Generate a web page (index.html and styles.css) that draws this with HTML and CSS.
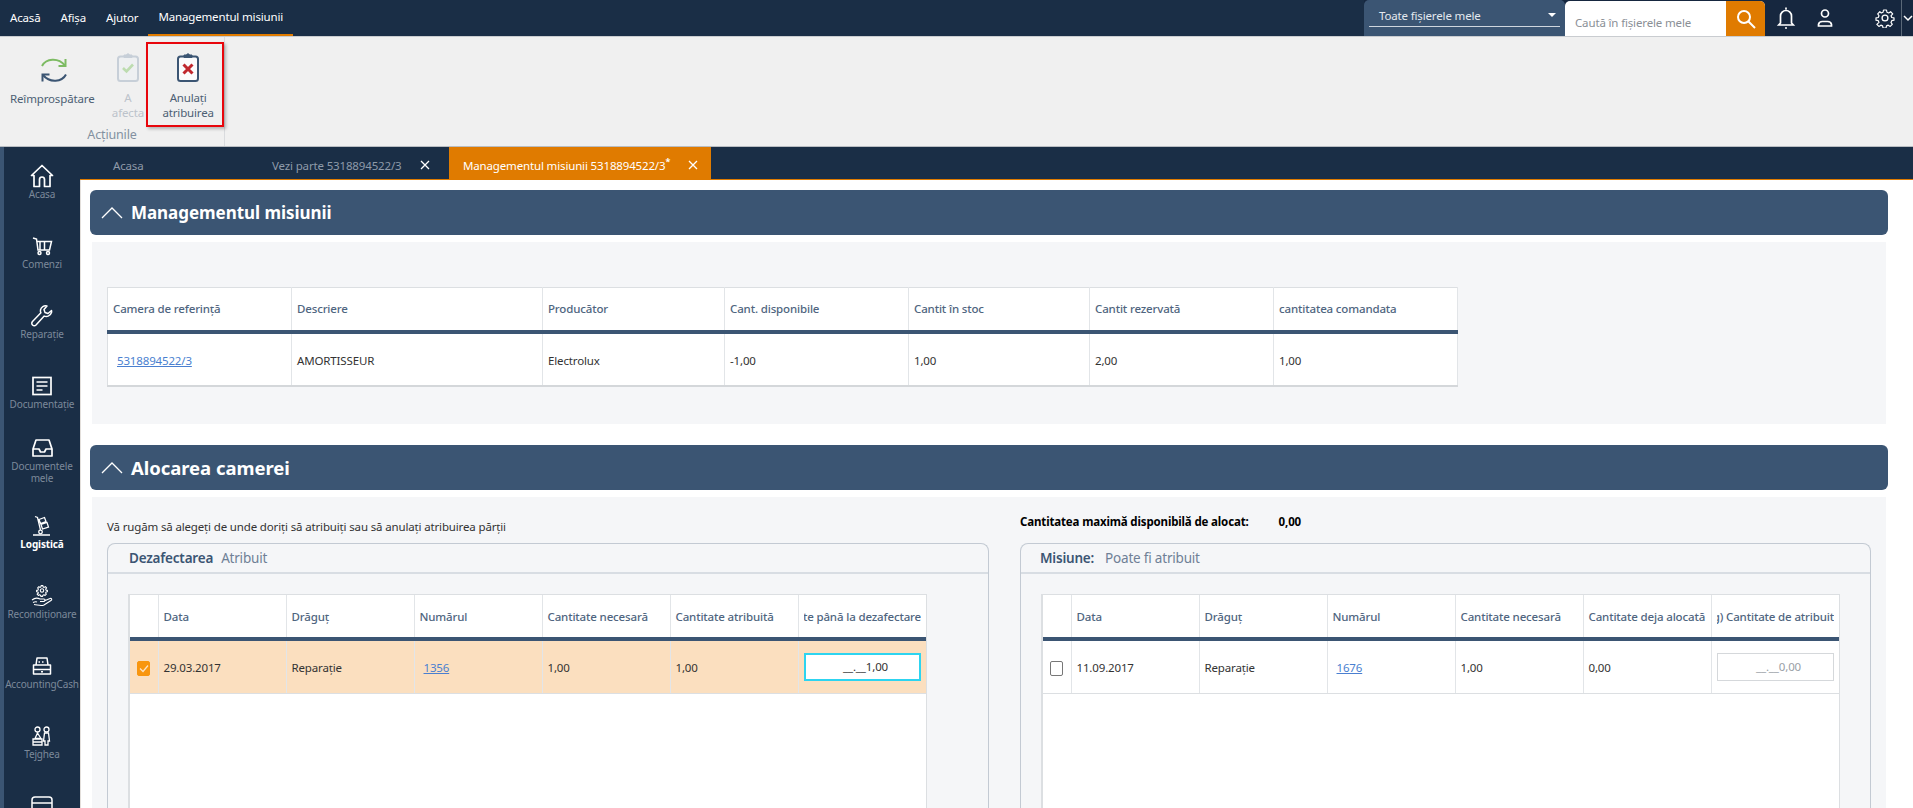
FILE: index.html
```html
<!DOCTYPE html>
<html lang="ro">
<head>
<meta charset="utf-8">
<title>Managementul misiunii</title>
<link rel="stylesheet" href="styles.css">
</head>
<body>
<div class="app">
  <header class="topbar">
    <nav class="menu">
      <a class="menu-item">Acasă</a>
      <a class="menu-item">Afișa</a>
      <a class="menu-item">Ajutor</a>
      <a class="menu-item menu-active">Managementul misiunii</a>
    </nav>
    <div class="top-tools">
      <div class="scope">
        <div class="scope-line"><span>Toate fișierele mele</span><i class="caret"></i></div>
      </div>
      <div class="search">
        <span class="search-text">Caută în fișierele mele</span>
        <span class="search-btn">
          <svg width="22" height="22" viewBox="0 0 22 22" fill="none" stroke="#fff" stroke-width="2"><circle cx="9" cy="9" r="6"/><path d="M13.5 13.5 20 20"/></svg>
        </span>
      </div>
      <span class="tool tool-bell">
        <svg width="20" height="24" viewBox="0 0 20 24" fill="none" stroke="#fff" stroke-width="1.7"><path d="M10 1.500v2M4.500 17V10a5.500 5.500 0 0 1 11 0v7l1.800 2H2.700z"/><circle cx="10" cy="22" r="1" fill="#fff" stroke="none"/></svg>
      </span>
      <span class="tool tool-user">
        <svg width="20" height="20" viewBox="0 0 20 20" fill="none" stroke="#fff" stroke-width="1.7"><circle cx="10" cy="5.500" r="3.500"/><path d="M3.500 18v-1.500a4 3.500 0 0 1 4-3h5a4 3.500 0 0 1 4 3V18z"/></svg>
      </span>
      <span class="tool tool-gear">
        <svg width="20" height="20" viewBox="0 0 24 24" fill="none" stroke="#fff" stroke-width="1.600" stroke-linejoin="round"><circle cx="12" cy="12" r="3.500"/><path d="M10 2h4l.6 3 2.300 1 2.600-1.700 2.800 2.800L20 9.700l1 2.300 3 .6v3l-3 .6-1 2.300 1.700 2.600-2.800 2.800-2.600-1.700-2.300 1-.6 2.800h-4l-.6-2.800-2.300-1-2.600 1.700-2.800-2.800L4 18.500l-1-2.300-3-.6v-3l3-.6 1-2.300-1.700-2.600 2.800-2.800L7.100 6l2.300-1z" transform="translate(1.200 .6) scale(.9)"/></svg>
      </span>
      <span class="collapse">
        <svg width="10" height="7" viewBox="0 0 10 7" fill="none" stroke="#fff" stroke-width="1.500"><path d="M1 1l4 4 4-4"/></svg>
      </span>
    </div>
  </header>

  <section class="ribbon">
    <div class="ribbon-group">
      <div class="ribbon-buttons">
        <div class="rbtn rbtn-refresh">
          <svg class="rbtn-icon" width="28" height="28" viewBox="0 0 28 28" fill="none" stroke-width="2">
            <path d="M2 10C6 2.500 18 1 25 9.500" stroke="#7dbb63"/>
            <path d="M25.500 3v7h-7" stroke="#7dbb63"/>
            <path d="M26 18.500C22 26 10 27.500 3 19" stroke="#3b5573"/>
            <path d="M2.500 25.500v-7h7" stroke="#3b5573"/>
          </svg>
          <span>Reîmprospătare</span>
        </div>
        <div class="rbtn rbtn-assign">
          <svg class="rbtn-icon" width="24" height="30" viewBox="0 0 24 30" fill="#eef0f2" stroke="#c7cfd8" stroke-width="2">
            <rect x="2" y="4.500" width="20" height="24.500" rx="2.500"/>
            <path d="M8 5.500V3h2.400a1.700 1.700 0 0 1 3.200 0H16v2.500z" fill="#c7cfd8" stroke-width="1"/>
            <path d="M7 16l3.500 3.500 6.500-7" stroke="#bddcb0" stroke-width="2.600" fill="none"/>
          </svg>
          <span>A<br>afecta</span>
        </div>
        <div class="rbtn rbtn-cancel">
          <svg class="rbtn-icon" width="24" height="30" viewBox="0 0 24 30" fill="#fbfbfc" stroke="#3b5573" stroke-width="2">
            <rect x="2" y="4.500" width="20" height="24.500" rx="2.500"/>
            <path d="M8 5.500V3h2.400a1.700 1.700 0 0 1 3.200 0H16v2.500z" fill="#3b5573" stroke-width="1"/>
            <path d="M7.500 12.500l9 9M16.500 12.500l-9 9" stroke="#c0272d" stroke-width="3" fill="none"/>
          </svg>
          <span>Anulați<br>atribuirea</span>
        </div>
      </div>
      <div class="ribbon-label">Acțiunile</div>
    </div>
  </section>

  <div class="main">
    <aside class="sidebar">
      <div class="side-item">
        <svg width="24" height="24" viewBox="0 0 24 24" fill="none" stroke="#fff" stroke-width="1.700" stroke-linejoin="round"><path d="M12 1.500 1.500 11.500H4V22.500h5.500v-7a2.500 2.500 0 0 1 5 0v7H20V11.500h2.500z"/></svg>
        <span>Acasa</span>
      </div>
      <div class="side-item">
        <svg width="21" height="19" viewBox="0 0 21 19" fill="none" stroke="#fff" stroke-width="1.500"><path d="M1 1.500l3.500 1 1.500 11h11.500l2-8.500H5M8 5v8.500M12.500 5v8.500" /><circle cx="7.500" cy="16.500" r="1.500"/><circle cx="16" cy="16.500" r="1.500"/></svg>
        <span>Comenzi</span>
      </div>
      <div class="side-item">
        <svg width="22" height="22" viewBox="0 0 22 22" fill="none" stroke="#fff" stroke-width="1.500" stroke-linejoin="round"><path d="M20.500 5.500l-3.500 3-3-1-1-3 3-3.500c-3-.7-6 .8-6.500 4-.2 1 0 2 .4 2.800L1.500 16.500c-1 1-1 2.500 0 3.500s2.500 1 3.500 0l8.200-8.900c3 1 6.300-.5 7.300-3.500.2-.7.2-1.400 0-2.100z"/></svg>
        <span>Reparație</span>
      </div>
      <div class="side-item">
        <svg width="20" height="19" viewBox="0 0 20 19" fill="none" stroke="#fff" stroke-width="1.700"><rect x="1" y="1" width="18" height="17"/><path d="M4.500 5.500h11M4.500 9.500h11M4.500 13.500h6"/></svg>
        <span>Documentație</span>
      </div>
      <div class="side-item side-two">
        <svg width="21" height="18" viewBox="0 0 21 18" fill="none" stroke="#fff" stroke-width="1.700" stroke-linejoin="round"><path d="M4 1h13l3 9v7H1v-7zM1 10h6l1.500 3h4l1.500-3h6"/></svg>
        <span>Documentele<br>mele</span>
      </div>
      <div class="side-item side-active">
        <svg width="20" height="21" viewBox="0 0 20 21" fill="none" stroke="#fff" stroke-width="1.300"><path d="M3 1l2.500 1 3 12.500M1 19.500h17M7 4l5.500-2 1.500 4-5.500 2zM9 9l6-2 1.500 4.500-6 2z"/><circle cx="8.500" cy="16.500" r="1.800"/></svg>
        <span>Logistică</span>
      </div>
      <div class="side-item">
        <svg width="22" height="23" viewBox="0 0 22 23" fill="none" stroke="#fff" stroke-width="1.100" stroke-linejoin="round"><circle cx="11" cy="6" r="1.700"/><path d="M10 2h4l.6 3 2.300 1 2.600-1.700 2.800 2.800L20 9.700l1 2.300 3 .6v3l-3 .6-1 2.300 1.700 2.600-2.800 2.800-2.600-1.700-2.300 1-.6 2.800h-4l-.6-2.800-2.300-1-2.600 1.700-2.800-2.800L4 18.500l-1-2.300-3-.6v-3l3-.6 1-2.300-1.700-2.600 2.800-2.800L7.100 6l2.300-1z" transform="translate(5.600 .2) scale(.45)" stroke-width="2.400"/><path d="M1 15.500c3-2.500 5-2.500 8-1h4c1.500.5 1.500 2 0 2.500H9M13 16.500l6-2.500c1.500-.5 2.500 1 1 2l-7 4.500c-3 1.500-6 0-10-.5M2 18c2-1 3-1 4-.5"/></svg>
        <span>Recondiționare</span>
      </div>
      <div class="side-item">
        <svg width="20" height="18" viewBox="0 0 20 18" fill="none" stroke="#fff" stroke-width="1.500" stroke-linejoin="round"><path d="M4 8 5 1h10l1 7M1.500 8h17v9h-17zM1.500 12.500h17M9 14.700h2M6.500 5h1.500M10 5h1.500"/></svg>
        <span>AccountingCash</span>
      </div>
      <div class="side-item">
        <svg width="20" height="20" viewBox="0 0 20 20" fill="none" stroke="#fff" stroke-width="1.300"><circle cx="5.500" cy="3.500" r="2.500"/><circle cx="14.500" cy="3.500" r="2.500"/><path d="M5.500 7l-2.500 5.500h6zM12.500 7h4l1 8h-1.500v4h-3v-4h-1.500zM1 13h9v6H1zM1 16h9"/></svg>
        <span>Tejghea</span>
      </div>
      <div class="side-item side-last">
        <svg width="22" height="20" viewBox="0 0 22 20" fill="none" stroke="#fff" stroke-width="1.500"><rect x="1" y="1" width="20" height="18" rx="3"/><path d="M1 7h20"/></svg>
      </div>
    </aside>

    <div class="workspace">
      <div class="tabs">
        <div class="tab tab-home">Acasa</div>
        <div class="tab tab-part">
          <span>Vezi parte 5318894522/3</span>
          <svg class="tab-x" width="10" height="10" viewBox="0 0 10 10" stroke="#fff" stroke-width="1.300"><path d="M1 1l8 8M9 1l-8 8"/></svg>
        </div>
        <div class="tab tab-active">
          <span>Managementul misiunii 5318894522/3<sup class="star">*</sup></span>
          <svg class="tab-x" width="10" height="10" viewBox="0 0 10 10" stroke="#fff" stroke-width="1.300"><path d="M1 1l8 8M9 1l-8 8"/></svg>
        </div>
      </div>

      <main class="content">
        <div class="sec-head">
          <svg width="22" height="12" viewBox="0 0 22 12" fill="none" stroke="#fff" stroke-width="1.300"><path d="M1 11 11 1l10 10"/></svg>
          <h2>Managementul misiunii</h2>
        </div>
        <div class="panel panel-top">
          <table class="grid grid-main">
            <colgroup><col class="m1"><col class="m2"><col class="m3"><col class="m4"><col class="m5"><col class="m6"><col class="m7"></colgroup>
            <thead><tr>
              <th>Camera de referință</th><th>Descriere</th><th>Producător</th><th>Cant. disponibile</th><th>Cantit în stoc</th><th>Cantit rezervată</th><th>cantitatea comandata</th>
            </tr></thead>
            <tbody><tr>
              <td><a class="link">5318894522/3</a></td><td>AMORTISSEUR</td><td>Electrolux</td><td>-1,00</td><td>1,00</td><td>2,00</td><td>1,00</td>
            </tr></tbody>
          </table>
        </div>

        <div class="sec-head sec-second">
          <svg width="22" height="12" viewBox="0 0 22 12" fill="none" stroke="#fff" stroke-width="1.300"><path d="M1 11 11 1l10 10"/></svg>
          <h2>Alocarea camerei</h2>
        </div>
        <div class="panel panel-alloc">
          <div class="col col-left">
            <p class="note">Vă rugăm să alegeți de unde doriți să atribuiți sau să anulați atribuirea părții</p>
            <div class="fieldset">
              <div class="fs-head"><b>Dezafectarea</b><span>Atribuit</span></div>
              <div class="table-wrap">
                <table class="grid grid-alloc">
                  <colgroup><col class="a0"><col class="a1"><col class="a1"><col class="a1"><col class="a1"><col class="a1"><col class="a1"></colgroup>
                  <thead><tr>
                    <th></th><th>Data</th><th>Drăguț</th><th>Numărul</th><th>Cantitate necesară</th><th>Cantitate atribuită</th>
                    <th><div class="clip-left"><span>Cantitate până la dezafectare</span></div></th>
                  </tr></thead>
                  <tbody><tr class="row-selected">
                    <td class="cell-check"><i class="check check-on"><svg width="10" height="9" viewBox="0 0 10 9" fill="none" stroke="#fde3c4" stroke-width="1.300"><path d="M1 4.500l3 3 5-6"/></svg></i></td>
                    <td>29.03.2017</td><td>Reparație</td><td><a class="link">1356</a></td><td>1,00</td><td>1,00</td>
                    <td class="cell-input"><div class="qty qty-focus">__.__1,00</div></td>
                  </tr></tbody>
                </table>
              </div>
            </div>
          </div>
          <div class="col col-right">
            <p class="max"><b>Cantitatea maximă disponibilă de alocat:</b><b class="max-val">0,00</b></p>
            <div class="fieldset">
              <div class="fs-head fs-head-right"><b>Misiune:</b><span>Poate fi atribuit</span></div>
              <div class="table-wrap">
                <table class="grid grid-alloc">
                  <colgroup><col class="a0"><col class="a1"><col class="a1"><col class="a1"><col class="a1"><col class="a1"><col class="a1"></colgroup>
                  <thead><tr>
                    <th></th><th>Data</th><th>Drăguț</th><th>Numărul</th><th>Cantitate necesară</th><th>Cantitate deja alocată</th>
                    <th><div class="clip-left"><span>(g) Cantitate de atribuit</span></div></th>
                  </tr></thead>
                  <tbody><tr>
                    <td class="cell-check"><i class="check"></i></td>
                    <td>11.09.2017</td><td>Reparație</td><td><a class="link">1676</a></td><td>1,00</td><td>0,00</td>
                    <td class="cell-input"><div class="qty qty-idle">__.__0,00</div></td>
                  </tr></tbody>
                </table>
              </div>
            </div>
          </div>
        </div>
      </main>
    </div>
  </div>
</div>
</body>
</html>
```

FILE: styles.css
```css
* { box-sizing: border-box; }
html, body { margin: 0; height: 100%; overflow: hidden; background: #fff; }
body { font-family: "Noto Sans", "Open Sans", sans-serif; font-size: 11.5px; letter-spacing: -.15px; color: #333; }
.app { display: flex; flex-direction: column; height: 808px; overflow: hidden; }

.topbar { flex: 0 0 36px; display: flex; justify-content: space-between; background: #1a2e46; }
.menu { display: flex; }
.menu-item { display: flex; align-items: center; padding: 0 10px 2px; color: #fff; height: 36px; }
.menu-active { border-bottom: 2px solid #e07b00; }
.top-tools { display: flex; height: 36px; background: #16273f; }
.scope { width: 201px; background: #3b5573; border-radius: 5px 5px 0 0; padding: 4px 5px 0; }
.scope-line { display: flex; justify-content: space-between; align-items: center; height: 23px; border-bottom: 1px solid #cfd6de; padding: 0 4px 0 10px; color: #e4e9ef; }
.caret { width: 0; height: 0; border: 4px solid transparent; border-top: 4px solid #fff; border-bottom: 0; }
.search { width: 200px; margin-top: 1px; display: flex; justify-content: space-between; background: #fff; border-radius: 5px 5px 0 0; overflow: hidden; }
.search-text { padding: 14px 0 0 10px; color: #8a8f96; }
.search-btn { width: 39px; display: flex; align-items: center; justify-content: center; background: #e07b00; }
.tool { display: flex; align-items: center; justify-content: center; }
.tool-bell { width: 40px; margin-left: 1px; }
.tool-user { width: 38px; }
.tool-gear { margin-left: 24px; width: 33px; }
.collapse { width: 12px; display: flex; align-items: center; justify-content: center; border-left: 1px solid #5a6878; }

.ribbon { flex: 0 0 111px; min-height: 0; overflow: hidden; background: #f0f0f0; border-top: 1px solid #c9ccd0; border-bottom: 1px solid #b9bdc2; }
.ribbon-group { width: 225px; height: 100%; border-right: 1px solid #d9dbde; display: flex; flex-direction: column; align-items: stretch; }
.ribbon-buttons { display: flex; margin-top: 5px; height: 85px; flex: none; }
.rbtn { display: flex; flex-direction: column; align-items: center; color: #4d5f74; line-height: 15px; text-align: center; }
.rbtn-icon { display: block; height: 30px; margin-bottom: 8px; flex: none; }
.rbtn-refresh { width: 105px; padding-top: 14px; }
.rbtn-refresh .rbtn-icon { height: 28px; margin-bottom: 7px; margin-left: 3px; }
.rbtn-assign { width: 42px; padding: 10px 0 0 5px; color: #bcc3cb; }
.rbtn-cancel { width: 78px; padding: 8px 0 0 6px; border: 2px solid #e8060c; box-shadow: 2px 2px 3px rgba(0,0,0,.25); }
.ribbon-label { text-align: center; line-height: 15px; font-size: 12.5px; color: #8390a0; }

.main { flex: 1; display: flex; min-height: 0; }
.sidebar { flex: 0 0 80px; background: #1a2e46; border-left: 4px solid #3b5573; overflow: hidden; }
.side-item { position: relative; height: 70px; display: flex; flex-direction: column; align-items: center; padding-top: 17px; color: #7c899a; font-size: 10px; line-height: 12px; text-align: center; white-space: nowrap; }
.side-item svg { display: block; height: 24px; flex: none; }
.side-two { padding-top: 9px; }
.side-active { color: #fff; font-weight: 700; }
.side-active::before { content: ""; position: absolute; left: -4px; top: 0; bottom: 0; width: 4px; background: #e07b00; }

.workspace { flex: 1; min-width: 0; display: flex; flex-direction: column; }
.tabs { flex: 0 0 33px; display: flex; background: #1a2e46; color: #8e9aa9; border-bottom: 1px solid #e07b00; }
.tab { display: flex; align-items: center; height: 32px; padding-top: 4px; white-space: nowrap; }
.tab-home { width: 178px; padding-left: 33px; }
.tab-part { width: 191px; padding-left: 14px; }
.tab-active { width: 262px; padding-left: 14px; background: #e07b00; color: #fff; }
.tab-x { margin-left: 18px; flex: none; }
.star { font-size: 9px; line-height: 0; font-weight: 700; }

.content { flex: 1; min-height: 0; background: #fff; border-left: 1px solid #e3dfdb; padding: 10px 25px 0 9px; overflow: hidden; }
.sec-head { height: 45px; display: flex; align-items: center; gap: 8px; padding-left: 11px; background: #3b5573; border-radius: 6px; color: #fff; }
.sec-head h2 { margin: 0; font-size: 17px; font-weight: 700; letter-spacing: -.05px; }
.sec-second { margin-top: 21px; }
.sec-second h2 { font-size: 18.5px; }
.panel { margin: 7px 2px 0; background: #f5f6f8; }
.panel-top { height: 182px; padding: 45px 15px 0; }
.panel-alloc { display: grid; grid-template-columns: 882px 851px; column-gap: 31px; padding: 16px 15px 0; }

.grid { border-collapse: collapse; table-layout: fixed; background: #fff; }
.grid th { height: 44px; padding: 0 5px; text-align: left; font-weight: 500; letter-spacing: -.15px; color: #4f6580; border-right: 1px solid #e2e5e8; border-bottom: 4px solid #3b5573; white-space: nowrap; }
.grid td { height: 54px; padding: 2px 5px 0; color: #333; border-right: 1px solid #e2e5e8; border-bottom: 1px solid #dcdfe2; white-space: nowrap; }
.grid-main { width: 1350px; border: 1px solid #dcdfe2; border-bottom: 2px solid #d4d7da; }
.m1 { width: 184px; } .m2 { width: 251px; } .m3 { width: 182px; } .m4 { width: 184px; } .m5 { width: 181px; } .m6 { width: 184px; } .m7 { width: 184px; }
.link { color: #4a7fd0; text-decoration: underline; padding-left: 4px; }

.note { margin: 0; padding-top: 4px; line-height: 20px; height: 30px; color: #333; }
.max { margin: 0; padding-top: 1px; line-height: 16px; height: 30px; color: #000; }
.max-val { margin-left: 30px; }
.fieldset { border: 1px solid #c3cad3; border-bottom: 0; border-radius: 8px 8px 0 0; height: 400px; }
.fs-head { height: 30px; display: flex; align-items: center; gap: 8px; padding: 0 0 0 21px; border-bottom: 2px solid #d8dde3; font-size: 13.5px; letter-spacing: -.2px; color: #6f8096; }
.fs-head b { font-weight: 600; color: #3b5573; }
.fs-head-right { gap: 11px; padding-left: 19px; }
.table-wrap { margin: 20px 0 0 20px; width: 799px; height: 340px; background: #fff; border: 1px solid #dcdfe2; border-left-width: 2px; }
.grid-alloc { width: 100%; }
.grid-alloc th:last-child, .grid-alloc td:last-child { border-right: 0; }
.a0 { width: 28px; } .a1 { width: 128px; }
.clip-left { display: flex; justify-content: flex-end; overflow: hidden; }
.clip-left span { flex: none; }
.row-selected td { background: #fbdfbf; }
.cell-check { text-align: center; }
.check { display: inline-flex; align-items: center; justify-content: center; width: 13px; height: 15px; vertical-align: middle; background: #fff; border: 1px solid #777; border-radius: 2px; }
.check-on { background: #f8960f; border-color: #f8960f; }
.cell-input { padding: 0 5px !important; }
.qty { height: 28px; line-height: 24px; text-align: right; padding-right: 31px; }
.qty-focus { background: #fff; border: 2px solid #2dd4f0; color: #333; }
.qty-idle { background: #fff; border: 1px solid #d5d8db; line-height: 26px; color: #9aa0a6; padding-right: 32px; }
```
